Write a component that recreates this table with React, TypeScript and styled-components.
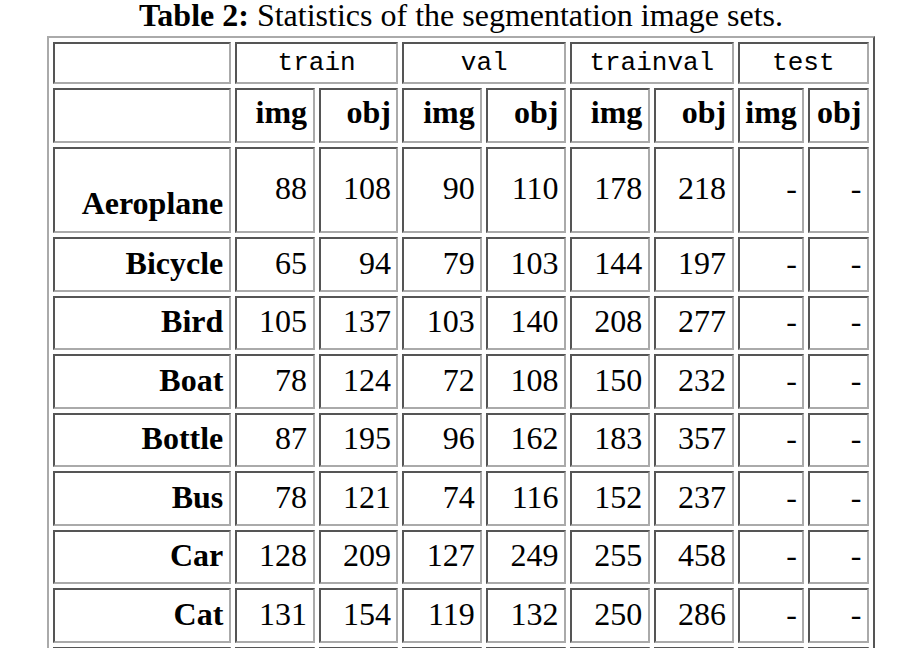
import React from 'react';
import styled, { createGlobalStyle, css } from 'styled-components';

interface ClassStats {
  name: string;
  values: string[];
  tall?: boolean;
}

const rows: ClassStats[] = [
  { name: 'Aeroplane', values: ['88', '108', '90', '110', '178', '218'], tall: true },
  { name: 'Bicycle', values: ['65', '94', '79', '103', '144', '197'] },
  { name: 'Bird', values: ['105', '137', '103', '140', '208', '277'] },
  { name: 'Boat', values: ['78', '124', '72', '108', '150', '232'] },
  { name: 'Bottle', values: ['87', '195', '96', '162', '183', '357'] },
  { name: 'Bus', values: ['78', '121', '74', '116', '152', '237'] },
  { name: 'Car', values: ['128', '209', '127', '249', '255', '458'] },
  { name: 'Cat', values: ['131', '154', '119', '132', '250', '286'] },
  { name: 'Chair', values: ['', '', '', '', '', ''] },
];

const groups = ['train', 'val', 'trainval', 'test'];
const colWidths = [176, 79, 79, 79, 79, 79, 79, 66, 60];

const App: React.FC = () => {
  return (
    <Page>
      <GlobalStyle />
      <Table>
        <Caption>
          <b>Table 2:</b> Statistics of the segmentation image sets.
        </Caption>
        <colgroup>
          {colWidths.map((w, i) => (
            <Col key={i} $w={w} />
          ))}
        </colgroup>
        <tbody>
          <Row $h={41.6}>
            <Blank />
            {groups.map(g => (
              <GroupHead key={g} colSpan={2}>{g}</GroupHead>
            ))}
          </Row>
          <Row $h={55.4}>
            <Blank />
            {groups.map(g => (
              <React.Fragment key={g}>
                <SubHead>img</SubHead>
                <SubHead>obj</SubHead>
              </React.Fragment>
            ))}
          </Row>
          {rows.map(r => (
            <Row key={r.name} $h={r.tall ? 86.4 : 54.5}>
              <RowLabel $bottom={r.tall}>{r.name}</RowLabel>
              {r.values.map((v, i) => (
                <Num key={i}>{v}</Num>
              ))}
              <Num>{r.values[0] ? '-' : ''}</Num>
              <Num>{r.values[0] ? '-' : ''}</Num>
            </Row>
          ))}
        </tbody>
      </Table>
    </Page>
  );
};

const GlobalStyle = createGlobalStyle`
  body {
    margin: 0;
    background: #fff;
    color: #000;
    font-family: 'Liberation Serif', 'Times New Roman', serif;
  }
`;

const Page = styled.div`
  padding-left: 47px;
`;

const Table = styled.table`
  width: 828px;
  table-layout: fixed;
  border-collapse: separate;
  border-spacing: 4.8px 4.4px;
  border: 2px solid;
  border-color: #aaa #555 #555 #aaa;
  font-size: 32px;
`;

const Caption = styled.caption`
  font-size: 32px;
  line-height: 30px;
  padding-bottom: 6px;
  text-align: center;
  white-space: nowrap;
`;

const Col = styled.col<{ $w: number }>`
  width: ${p => p.$w}px;
`;

const Row = styled.tr<{ $h: number }>`
  height: ${p => p.$h}px;
`;

const cell = css`
  border: 2px solid;
  border-color: #555 #aaa #aaa #555;
  padding: 0 5.5px;
  white-space: nowrap;
`;

const Blank = styled.td`
  ${cell}
`;

const GroupHead = styled.th`
  ${cell}
  font-family: 'Liberation Mono', 'Courier New', monospace;
  font-size: 26px;
  font-weight: normal;
  text-align: center;
  vertical-align: middle;
`;

const SubHead = styled.th`
  ${cell}
  font-weight: bold;
  text-align: right;
  vertical-align: top;
  padding-top: 4px;
`;

const RowLabel = styled.th<{ $bottom?: boolean }>`
  ${cell}
  font-weight: bold;
  text-align: right;
  vertical-align: ${p => (p.$bottom ? 'bottom' : 'middle')};
  padding-bottom: ${p => (p.$bottom ? 9 : 3)}px;
`;

const Num = styled.td`
  ${cell}
  text-align: right;
  vertical-align: middle;
  padding-bottom: 3px;
`;

export default App;
